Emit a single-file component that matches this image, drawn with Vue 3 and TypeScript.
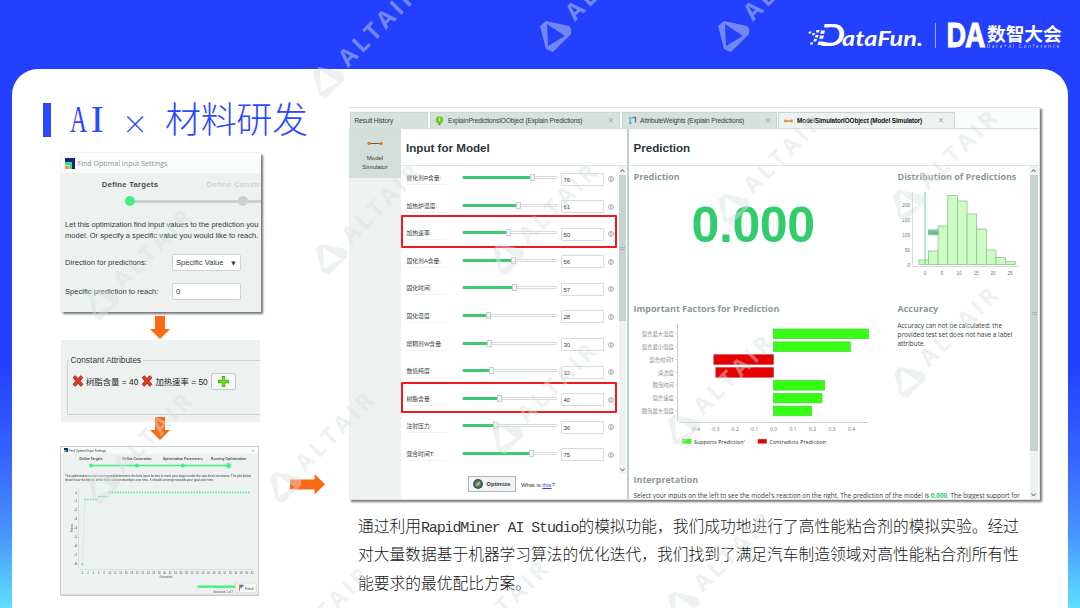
<script setup lang="ts">
interface Parameter {
  label: string;
  value: number;
}

interface Factor {
  label: string;
  from: number;
  to: number;
}

const parameters: Parameter[] = [
  { label: '催化剂R含量:', value: 76 },
  { label: '加热炉温度:', value: 61 },
  { label: '加热速率:', value: 50 },
  { label: '固化剂A含量:', value: 56 },
  { label: '固化时间:', value: 57 },
  { label: '固化温度:', value: 28 },
  { label: '增稠剂W含量:', value: 30 },
  { label: '数值纯度:', value: 32 },
  { label: '树脂含量:', value: 40 },
  { label: '注射压力:', value: 36 },
  { label: '混合时间T:', value: 75 },
];

// x extents in the factor chart's own units
const factors: Factor[] = [
  { label: '混合最大温度', from: 139.5, to: 234.5 },
  { label: '混合最小温度', from: 139.5, to: 216.3 },
  { label: '混合时间T', from: 79.8, to: 139.5 },
  { label: '清洁度', from: 81.8, to: 139.5 },
  { label: '脱泡时间', from: 139.5, to: 190.7 },
  { label: '混合速度', from: 139.5, to: 188 },
  { label: '脱泡最大温度', from: 139.5, to: 177.7 },
];
const factorTicks = ['-0.4', '-0.3', '-0.2', '-0.1', '0.0', '0.1', '0.2', '0.3', '0.4'];

const histogram = [4.5, 13.5, 38.5, 69, 63.5, 50.5, 35.5, 14.5, 7, 2.7];

const steps = [
  { x: 31, label: 'Define Targets', w: 23 },
  { x: 77, label: 'Define Constraints', w: 29 },
  { x: 122.7, label: 'Optimization Parameters', w: 40 },
  { x: 168.5, label: 'Running Optimization', w: 35 },
];

// fitness per generation: one bad start, two plateaus, then converged
const fitness = Array.from({ length: 62 }, (_, i) => {
  let y = 46.4;
  if (i === 0) y = 118.4;
  else if (i < 6) y = 53.5;
  else if (i < 10) y = 50.5;
  return { x: 22.4 + i * 2.73, y };
});

const watermarks = [
  [328, 82], [555, 36], [733, 36],
  [103, 304], [331, 259], [508, 259], [733, 209], [908, 205],
  [103, 488], [285, 487], [507, 438], [683, 430], [909, 382],
  [280, 662], [459, 656], [683, 607],
];
</script>

<template>
  <div class="slide">
    <header class="brand">
      <svg class="datafun" width="118" height="28" viewBox="0 0 118 28">
        <text x="13" y="24.500" class="datafun-d" textLength="25" lengthAdjust="spacingAndGlyphs">D</text>
        <path d="M12 6.500h13L21.500 21H8z" fill="#2440ff" />
        <path fill="#fff" d="M2 10.500h2.500l-.5 2H1.500zM5.500 12h2.500l-.6 2.300H5zM9.500 9h3l-.7 2.600H9zM14 9.500h4l-.9 3.200h-4zM8.500 14h3l-.7 2.600H8zM13 14.500h4l-.9 3.200h-4zM7 18h3l-.6 2.400H6.500zM3.500 21.500h2.800l-.5 2H3zM11.500 20.500h4.800l-.9 3.600h-4.800z" />
        <text x="35" y="24.500" class="datafun-t" textLength="81" lengthAdjust="spacingAndGlyphs">ataFun.</text>
      </svg>
      <span class="brand-rule"></span>
      <svg class="da" width="37" height="28" viewBox="0 0 37 28">
        <text x="-1.500" y="26" textLength="39" lengthAdjust="spacingAndGlyphs">DA</text>
      </svg>
      <div class="summit">
        <strong>数智大会</strong>
        <small>Data+AI Conference</small>
      </div>
    </header>

    <main class="card">
      <section class="flow">
        <h1 class="title">
          <span class="title-bar"></span>
          <svg width="250" height="44" viewBox="0 0 250 44">
            <text x="0" y="34" class="latin" textLength="17" lengthAdjust="spacingAndGlyphs">A</text>
            <text x="20.500" y="34" class="latin" textLength="13.500" lengthAdjust="spacingAndGlyphs">I</text>
            <text x="65" y="36" class="times">×</text>
            <text x="95" y="35" class="han" textLength="143">材料研发</text>
          </svg>
        </h1>

        <div class="dialog">
          <div class="dialog-bar">
            <svg width="10" height="11" viewBox="0 0 10 11">
              <path d="M0 0h10v11H7V4H0z" fill="#14286e" />
              <path d="M0 4h7v7H4.500V7H0z" fill="#2fe0a0" />
              <path d="M0 7.500h4V11H0z" fill="#ff9a2e" />
            </svg>
            <span>Find Optimal Input Settings</span>
          </div>
          <div class="wizard">
            <div class="wizard-step on"><b>Define Targets</b><i></i></div>
            <div class="wizard-step"><b>Define Constraints</b><i></i></div>
          </div>
          <p class="dialog-text">Let this optimization find input values to the prediction you<br />model. Or specify a specific value you would like to reach.</p>
          <div class="field">
            <label>Direction for predictions:</label>
            <span class="box">Specific Value<em>▼</em></span>
          </div>
          <div class="field">
            <label>Specific prediction to reach:</label>
            <span class="box">0</span>
          </div>
        </div>

        <svg class="down" width="20" height="23" viewBox="0 0 20 23">
          <path d="M5 0h10v13h5L10 23 0 13h5z" fill="#fa6a14" />
        </svg>

        <div class="constants">
          <div class="group">
            <span class="legend">Constant Attributes</span>
            <template v-for="item in ['树脂含量 = 40', '加热速率 = 50']" :key="item">
              <svg width="12" height="12" viewBox="0 0 12 12">
                <path d="M2 1.500l8 9M10 1.500l-8 9" stroke="#a82010" stroke-width="3.600" />
                <path d="M2 1.500l8 9M10 1.500l-8 9" stroke="#df4027" stroke-width="2.200" />
              </svg>
              <span class="attr">{{ item }}</span>
            </template>
            <span class="plus">
              <svg width="11" height="11" viewBox="0 0 11 11">
                <path d="M5.500 0v11M0 5.500h11" stroke="#4aa81a" stroke-width="3.400" />
                <path d="M5.500 .7v9.600M.7 5.500h9.600" stroke="#6cd82a" stroke-width="2.200" />
              </svg>
            </span>
          </div>
        </div>

        <svg class="down second" width="20" height="23" viewBox="0 0 20 23">
          <path d="M5 0h10v13h5L10 23 0 13h5z" fill="#fa6a14" />
        </svg>

        <div class="run">
          <svg class="run-window" width="200" height="150" viewBox="0 0 200 150">
            <rect x=".5" y=".5" width="198" height="148.500" fill="#edf2f1" stroke="#c4cfcc" />
            <rect x="1" y="1" width="197" height="6.500" fill="#fafbfb" />
            <path d="M4 2h4v4H4z" fill="#14286e" /><path d="M4 4h2.500v2H4z" fill="#2fe0a0" />
            <text x="9" y="5.800" class="t3" textLength="37">Find Optimal Input Settings</text>
            <text x="192" y="6" class="t3">×</text>
            <path d="M31 19.500h137.500" stroke="#43ef85" stroke-width="1.300" />
            <circle v-for="s in steps" :key="s.x" :cx="s.x" cy="19.500" r="2.100" fill="#43ef85" />
            <circle cx="168.500" cy="19.500" r="3" fill="#43ef85" opacity=".5" />
            <text v-for="s in steps" :key="s.label" :x="s.x - s.w / 2" y="14" class="t3 bold" :textLength="s.w">{{ s.label }}</text>
            <text x="5" y="30.800" class="t3" textLength="186">The optimization is now running and determines the best input factors to meet your target under the specified constraints. The plot below</text>
            <text x="5" y="35.300" class="t3" textLength="149">shows how the fitness of the best solution develops over time. It should converge towards your goal over time.</text>
            <path d="M18.500 43v79M20 123.500h173" stroke="#ccd3d2" stroke-width=".6" fill="none" />
            <text v-for="n in 9" :key="n" x="17" :y="47.500 + (n - 1) * 8.900" class="t3 end">{{ n === 1 ? 0 : 1 - n }}</text>
            <text v-for="n in 32" :key="'x' + n" :x="22.400 + (n - 1) * 5.480" y="127.600" class="t2">{{ (n - 1) * 2 }}</text>
            <text x="106" y="131.800" class="t2">Generation</text>
            <text x="0" y="0" class="t2" transform="translate(13 82) rotate(-90)">Fitness</text>
            <path d="M22.400 118.400L25 53.500" stroke="#cfe0d8" stroke-width=".6" />
            <circle v-for="p in fitness" :key="p.x" :cx="p.x" :cy="p.y" r=".85" fill="#43ef85" />
            <rect x="137.500" y="139.500" width="38" height="2.300" fill="#43ef85" />
            <text x="163" y="146.500" class="t2">Generation 1 of 2</text>
            <rect x="175.500" y="137" width="21" height="9.500" fill="#f7f9f9" stroke="#c4cfcc" stroke-width=".5" />
            <path d="M179.500 138.500v6.500" stroke="#e08030" stroke-width="1" />
            <path d="M180 138.800h4l-3.500 4z" fill="#4a6a90" />
            <text x="185" y="143.500" class="t3">Finish</text>
          </svg>
          <svg class="right-arrow" width="35" height="21" viewBox="0 0 35 21">
            <path d="M0 5.500h24.500V0L35 10.300 24.500 20.600v-5.200H0z" fill="#fa6a14" />
          </svg>
        </div>
      </section>

      <section class="studio-side">
        <div class="studio">
          <nav class="tabs">
            <span class="tab history">Result History</span>
            <span class="tab explain">
              <svg width="9" height="9" viewBox="0 0 9 9"><circle cx="4.500" cy="4" r="3.800" fill="#6ad01c" /><path d="M3.500 7.500h2V9h-2z" fill="#667" /><path d="M4.500 2v3" stroke="#fff" /></svg>
              <span>ExplainPredictionsIOObject (Explain Predictions)</span><i>✕</i>
            </span>
            <span class="tab weights">
              <svg width="9" height="9" viewBox="0 0 9 9"><path d="M2.200 1v7M.8 1.800h3M.8 7h3" stroke="#3cc0e8" stroke-width="1.300" /><path d="M4.500 1.500H7.500v5" stroke="#6b8088" stroke-width="1.400" fill="none" /></svg>
              <span>AttributeWeights (Explain Predictions)</span><i>✕</i>
            </span>
            <span class="tab active">
              <svg width="9" height="4" viewBox="0 0 9 4"><path d="M1 2h7" stroke="#667" /><circle cx="1.500" cy="2" r="1.400" fill="#f80" /><circle cx="7.500" cy="2" r="1.400" fill="#f80" /></svg>
              <span>ModelSimulatorIOObject (Model Simulator)</span><i>✕</i>
            </span>
          </nav>

          <div class="workspace">
            <aside class="rail">
              <div class="rail-item">
                <svg width="16" height="5" viewBox="0 0 16 5"><path d="M2 2.500h12" stroke="#47606a" /><circle cx="2" cy="2.500" r="1.700" fill="#f97a14" /><circle cx="14" cy="2.500" r="1.700" fill="#f97a14" /></svg>
                <span>Model</span>
                <span>Simulator</span>
              </div>
            </aside>

            <div class="inputs">
              <h2>Input for Model</h2>
              <div class="inputs-body">
                <div class="rows">
                  <div v-for="p in parameters" :key="p.label" class="row">
                    <span class="row-label">{{ p.label }}</span>
                    <div class="slider">
                      <div class="slider-fill" :style="{ width: p.value * 0.98 + '%' }"></div>
                      <div class="slider-thumb"></div>
                    </div>
                    <span class="row-value">{{ p.value }}</span>
                    <svg class="info" width="6" height="6" viewBox="0 0 6 6"><circle cx="3" cy="3" r="2.500" fill="none" stroke="#8a9291" stroke-width=".7" /><path d="M3 1.300v3.400" stroke="#6f7877" stroke-width=".8" /></svg>
                  </div>
                  <div class="mark rate"></div>
                  <div class="mark resin"></div>
                </div>
                <div class="scroll">
                  <svg width="7" height="9" viewBox="0 0 7 9"><path d="M1.500 6l2-2.500 2 2.500" class="chev" /></svg>
                  <div class="thumb"><i></i></div>
                  <svg class="bottom" width="7" height="9" viewBox="0 0 7 9"><path d="M1.500 3.500l2 2.500 2-2.500" class="chev" /></svg>
                </div>
              </div>
              <div class="actions">
                <span class="optimize">
                  <svg width="10" height="10" viewBox="0 0 10 10"><circle cx="5" cy="5" r="4.900" fill="#33515c" /><circle cx="5" cy="5" r="3.400" fill="#4d7884" /><path d="M3 7l1-2.500L7.500 2 6 6z" fill="#f2c21c" /></svg>
                  Optimize
                </span>
                <span class="what">What is <u>this</u>?</span>
              </div>
            </div>

            <div class="splitter"></div>

            <div class="result">
              <h2>Prediction</h2>
              <div class="result-body">
                <div class="result-grid">
                  <div class="cell">
                    <h3>Prediction</h3>
                    <div class="score">0.000</div>
                  </div>
                  <div class="cell">
                    <h3>Distribution of Predictions</h3>
                    <svg class="hist" width="128" height="90" viewBox="0 0 128 90">
                      <path d="M14.500 4v73M14 78.500h107" stroke="#d4dad9" fill="none" />
                      <text v-for="n in 5" :key="n" x="12" :y="79 - (n - 1) * 15.100" class="axis end">{{ (n - 1) * 50 }}</text>
                      <text v-for="n in 6" :key="'b' + n" :x="27 + (n - 1) * 17" y="86.500" class="axis mid">{{ (n - 1) * 5 }}</text>
                      <rect v-for="(h, i) in histogram" :key="'h' + i" :x="20.800 + i * 9.650" :y="76.500 - h" width="9.650" :height="h" fill="#ccfcc3" stroke="#98bd97" stroke-width=".8" />
                      <path d="M27 4v72.500" stroke="#58dc96" />
                      <rect x="30" y="41.300" width="10.500" height="6" fill="#8fc8b0" />
                      <text x="30.500" y="46.300" class="axis tag">0.000</text>
                    </svg>
                  </div>
                  <div class="cell">
                    <h3>Important Factors for Prediction</h3>
                    <svg class="factors" width="250" height="132" viewBox="0 0 250 132">
                      <path d="M43.500 5v97M45 103.500h189" stroke="#c9cfce" fill="none" />
                      <g v-for="(f, i) in factors" :key="f.label">
                        <path :d="`M41 ${14.8 + i * 12.85}h3`" stroke="#c9cfce" stroke-width=".7" />
                        <text x="40" :y="17 + i * 12.850" class="factor-label">{{ f.label }}</text>
                        <rect :x="f.from" :y="10 + i * 12.850" :width="f.to - f.from" height="9.700" :fill="f.from < 139 ? '#e60000' : '#35ff12'" :stroke="f.from < 139 ? '#c33' : '#48c838'" stroke-width=".6" />
                      </g>
                      <text v-for="(t, i) in factorTicks" :key="t" :x="61.500 + i * 19.500" y="111.500" class="tick">{{ t }}</text>
                      <rect x="48.500" y="120.200" width="8.500" height="4" fill="#35ff12" stroke="#48c838" stroke-width=".6" />
                      <text x="60" y="124.500" class="key" textLength="51">Supports Prediction'</text>
                      <rect x="124" y="120.200" width="8.500" height="4" fill="#e60000" stroke="#b33" stroke-width=".6" />
                      <text x="135.500" y="124.500" class="key" textLength="56.500">Contradicts Prediction</text>
                    </svg>
                  </div>
                  <div class="cell">
                    <h3>Accuracy</h3>
                    <p class="accuracy">Accuracy can not be calculated: the<br />provided test set does not have a label<br />attribute.</p>
                  </div>
                  <div class="cell wide">
                    <h3>Interpretation</h3>
                    <p class="interp">Select your inputs on the left to see the model's reaction on the right. The prediction of the model is <b>0.000</b>. The biggest support for</p>
                  </div>
                </div>
                <div class="scroll wide-scroll">
                  <svg width="7" height="9" viewBox="0 0 7 9"><path d="M1.500 6l2-2.500 2 2.500" class="chev" /></svg>
                  <div class="thumb"><i></i></div>
                  <svg class="bottom" width="7" height="9" viewBox="0 0 7 9"><path d="M1.500 3.500l2 2.500 2-2.500" class="chev" /></svg>
                </div>
              </div>
            </div>
          </div>
        </div>

        <p class="summary">
          通过利用<span>RapidMiner AI Studio</span>的模拟功能，我们成功地进行了高性能粘合剂的模拟实验。经过<br />
          对大量数据基于机器学习算法的优化迭代，我们找到了满足汽车制造领域对高性能粘合剂所有性<br />
          能要求的最优配比方案。
        </p>
      </section>
    </main>

    <svg class="watermarks" width="1080" height="608" viewBox="0 0 1080 608">
      <g v-for="([x, y], i) in watermarks" :key="i" :transform="`translate(${x} ${y})`">
        <path fill-rule="evenodd" d="M-15-10L-9-15 14-10Q17-8 16-2L-2 16-9 13ZM-8-12L-7 10 10 0Z" />
        <text transform="translate(20 -14) rotate(-45)" x="0" y="0" textLength="100">ALTAIR</text>
      </g>
    </svg>
  </div>
</template>

<style>
body {
  margin: 0;
  overflow: hidden;
}
</style>

<style scoped>
.slide {
  position: relative;
  width: 1080px;
  height: 608px;
  overflow: hidden;
  display: flex;
  flex-direction: column;
  background: linear-gradient(#2440ff 60%, #3563ff 75%, #4796ff 88%, #5ee0ff 100%);
  font-family: "Liberation Sans", "Noto Sans CJK SC", sans-serif;
  color: #333b3c;
}

.slide * {
  box-sizing: border-box;
}

h1,
h2,
h3,
p {
  margin: 0;
}

svg {
  flex: none;
  display: block;
  overflow: visible;
}

/* header */
.brand {
  flex: none;
  height: 69px;
  padding: 21px 18px 0 0;
  display: flex;
  justify-content: flex-end;
  align-items: flex-start;
  color: #fff;
}

.datafun-d,
.datafun-t {
  fill: #fff;
  font-family: Lato, sans-serif;
  font-style: italic;
  font-weight: 700;
}

.datafun-d {
  font-size: 30px;
}

.datafun-t {
  font-size: 21px;
}

.brand-rule {
  width: 1px;
  height: 25px;
  margin: 2px 12px 0 10px;
  background: rgba(255, 255, 255, 0.55);
}

.da text {
  fill: #fff;
  font-family: Inter, sans-serif;
  font-weight: 700;
  font-size: 33px;
  stroke: #fff;
  stroke-width: 0.8px;
}

.summit {
  width: 75px;
  margin-left: 2px;
  display: flex;
  flex-direction: column;
}

.summit strong {
  font: 700 18.7px/23px "Noto Sans CJK SC", sans-serif;
  white-space: nowrap;
}

.summit small {
  font: 4.4px/5px "Open Sans", sans-serif;
  letter-spacing: 1.85px;
  white-space: nowrap;
  opacity: 0.75;
}

/* white card */
.card {
  flex: 1;
  margin: 0 12px;
  border-radius: 26px 26px 0 0;
  background: #fff;
  display: flex;
}

.flow {
  width: 337px;
  padding: 29px 0 0 31px;
  display: flex;
  flex-direction: column;
  align-items: flex-start;
}

.title {
  height: 44px;
  display: flex;
  align-items: flex-start;
  gap: 19px;
}

.title-bar {
  width: 8px;
  height: 34px;
  margin-top: 5px;
  background: #2a48ff;
}

.title text {
  fill: #2a48ff;
}

.latin {
  font: 37px "Liberation Serif", serif;
}

.times {
  font: 300 26px "Noto Sans CJK SC", sans-serif;
  text-anchor: middle;
}

.han {
  font: 300 36px "Noto Sans CJK SC", sans-serif;
}

.dialog {
  width: 200px;
  height: 159px;
  margin: 11px 0 0 17.5px;
  background: #edf2f1;
  box-shadow: 2px 2px 2px #777, 0 0 1px #aaa;
  display: flex;
  flex-direction: column;
}

.dialog-bar {
  height: 20px;
  padding: 0 4px;
  display: flex;
  align-items: center;
  gap: 3px;
  background: #fafbfb;
  font: 7.1px "Open Sans", sans-serif;
  color: #8f9393;
}

.wizard {
  height: 46px;
  padding-top: 7px;
  display: flex;
  overflow: hidden;
}

.wizard-step {
  flex: none;
  position: relative;
  width: 113px;
  margin-left: 13px;
  display: flex;
  flex-direction: column;
  align-items: center;
  gap: 6px;
}

.wizard-step + .wizard-step {
  margin-left: 0;
}

.wizard-step b {
  font: 700 7.7px/10px "Liberation Sans", sans-serif;
  letter-spacing: 0.25px;
  color: #cdd4d3;
  white-space: nowrap;
}

.wizard-step.on b {
  color: #47514f;
}

.wizard-step i {
  position: relative;
  width: 10px;
  height: 10px;
  border-radius: 50%;
  background: #c9d1d0;
}

.wizard-step.on i {
  background: #43ef85;
}

.wizard-step i::after {
  content: "";
  position: absolute;
  left: 10px;
  top: 3.5px;
  width: 104px;
  height: 3px;
  background: #c9d1d0;
}

.dialog-text {
  padding-left: 4.5px;
  font-size: 7.55px;
  line-height: 11px;
  white-space: nowrap;
}

.field {
  height: 29px;
  padding-left: 4.5px;
  display: flex;
  align-items: center;
  font-size: 7.6px;
}

.dialog-text + .field {
  margin-top: 7px;
}

.field label {
  width: 107px;
  white-space: nowrap;
}

.box {
  width: 68.5px;
  height: 17px;
  padding: 0 4px 0 3px;
  display: flex;
  align-items: center;
  justify-content: space-between;
  border: 1px solid #ccd5d3;
  border-radius: 2px;
  background: #fff;
  white-space: nowrap;
}

.box em {
  font: normal 5.5px "DejaVu Sans", sans-serif;
}

.down {
  margin: 4px 0 0 107px;
}

.constants {
  width: 199px;
  height: 82px;
  margin: 1px 0 0 17.5px;
  padding: 20px 0 0 6px;
  background: #edf2f1;
}

.group {
  position: relative;
  height: 55px;
  padding: 0 0 13px 4px;
  display: flex;
  align-items: center;
  gap: 2.5px;
  border: 1px solid #ccd4d2;
  border-right: 0;
}

.legend {
  position: absolute;
  left: 1px;
  top: -6px;
  padding: 0 2px;
  font-size: 8.4px;
  line-height: 11px;
  background: #edf2f1;
}

.attr {
  font-size: 8.4px;
  white-space: nowrap;
  color: #222;
}

.plus {
  width: 25px;
  height: 17px;
  margin-left: 1px;
  display: flex;
  align-items: center;
  justify-content: center;
  border: 1px solid #bfc9c7;
  border-radius: 2px;
  background: #f7f9f9;
}

.down.second {
  position: relative;
  margin-top: -5px;
}

.run {
  margin: 6px 0 0 17px;
  display: flex;
  align-items: flex-start;
}

.run-window {
  filter: drop-shadow(0 0 0.5px #999);
}

.right-arrow {
  margin: 28px 0 0 30px;
}

.t3,
.t2 {
  font: 3.2px "Liberation Sans", sans-serif;
  fill: #3c4444;
}

.t3.bold {
  font-weight: 700;
}

.t2 {
  font-size: 2.6px;
  fill: #555;
  text-anchor: middle;
}

.t3.end {
  text-anchor: end;
}

/* studio window */
.studio-side {
  padding-top: 38px;
}

.studio {
  width: 691px;
  height: 393px;
  border: 1px solid #e0e4e3;
  border-left-width: 0;
  background: #fff;
  box-shadow: 2px 2px 2px #777;
  display: flex;
  flex-direction: column;
}

.tabs {
  flex: none;
  height: 21px;
  padding: 4px 0 0 0.5px;
  display: flex;
  gap: 2px;
  background: #fbfcfc;
  border-bottom: 1px solid #d4dcda;
}

.tab {
  height: 16px;
  padding: 0 5px;
  display: flex;
  align-items: center;
  background: #d8dfdd;
  border: 1px solid #ccd5d3;
  border-bottom: 0;
  font-size: 6.5px;
  letter-spacing: -0.13px;
  white-space: nowrap;
}

.tab i {
  margin-left: auto;
  font: 7.5px "DejaVu Sans", sans-serif;
  color: #a3acaa;
}

.history {
  width: 78.5px;
  padding-left: 4px;
}

.explain {
  width: 190px;
  padding-left: 4px;
  gap: 4px;
}

.weights {
  width: 155px;
  gap: 3px;
}

.tab.active {
  width: 177px;
  margin-left: -1px;
  padding-right: 10px;
  gap: 4px;
  background: #edf1f0;
  font-weight: 700;
  font-size: 6.4px;
  color: #111;
}

.workspace {
  flex: 1;
  min-height: 0;
  display: flex;
}

.rail {
  width: 52px;
  background: #edf2f1;
}

.rail-item {
  height: 49px;
  padding-top: 11px;
  display: flex;
  flex-direction: column;
  align-items: center;
  background: #d3dedb;
  font-size: 6px;
  line-height: 9px;
}

.rail-item svg {
  margin: 1px 0 8px;
}

h2 {
  flex: none;
  height: 37px;
  padding-left: 5px;
  font-size: 11.6px;
  line-height: 38px;
  color: #29353a;
  border-bottom: 1px solid #dfe4e3;
}

.inputs {
  width: 226px;
  display: flex;
  flex-direction: column;
}

.inputs-body {
  flex: none;
  height: 308px;
  display: flex;
}

.rows {
  position: relative;
  width: 218px;
  padding-right: 1px;
}

.row {
  position: relative;
  top: -0.8px;
  height: 27.6px;
  padding-left: 5.5px;
  display: flex;
  align-items: center;
}

.row-label {
  width: 40px;
  margin-right: 15px;
  font: 5.8px/11px "Liberation Sans", "Noto Sans CJK SC", sans-serif;
  border-bottom: 1px solid #f0f2f2;
  white-space: nowrap;
}

.slider {
  width: 95.5px;
  height: 3px;
  margin-top: -3px;
  display: flex;
  align-items: center;
  border: 1px solid #d5dbda;
  border-radius: 1px;
}

.slider-fill {
  height: 3px;
  flex: none;
  background: #3ccb74;
}

.slider-thumb {
  flex: none;
  width: 5px;
  height: 7px;
  margin-left: -2.5px;
  border: 1px solid #c6cfcc;
  background: #f1f4f3;
}

.row-value {
  width: 43.5px;
  height: 13px;
  margin-left: 3.5px;
  padding-left: 2px;
  border: 1px solid #d6dcdb;
  border-radius: 1px;
  background: #fff;
  font-size: 6px;
  line-height: 12px;
}

.info {
  margin-left: 3.5px;
}

.mark {
  position: absolute;
  left: 0;
  width: 216px;
  border: 2px solid #f0191e;
  border-radius: 1px;
}

.rate {
  top: 48.5px;
  height: 33px;
}

.resin {
  top: 216px;
  height: 30.5px;
}

.scroll {
  width: 7px;
  display: flex;
  flex-direction: column;
  background: #edf2f1;
}

.chev {
  fill: none;
  stroke: #5e6766;
  stroke-width: 1;
}

.thumb {
  height: 146px;
  display: flex;
  align-items: center;
  justify-content: center;
  background: #c8d3d0;
}

.thumb i {
  width: 5px;
  height: 3px;
  border: solid #a5b2af;
  border-width: 1px 0;
}

.bottom {
  margin-top: auto;
}

.actions {
  height: 27px;
  padding: 2px 0 0 67px;
  display: flex;
  align-items: flex-start;
  gap: 5px;
}

.optimize {
  width: 48px;
  height: 16px;
  display: flex;
  align-items: center;
  justify-content: center;
  gap: 3px;
  border: 1px solid #aeb9b7;
  background: #f1f4f4;
  font-size: 5.7px;
  font-weight: 700;
}

.what {
  font-size: 5.9px;
  line-height: 18px;
}

.what u {
  color: #3939e8;
}

.splitter {
  width: 2px;
  margin-left: -0.5px;
  background: #c2cecb;
}

.result {
  flex: 1;
  min-width: 0;
  display: flex;
  flex-direction: column;
}

.result-body {
  height: 333px;
  display: flex;
  overflow: hidden;
}

.result-grid {
  width: 401.5px;
  padding: 4px 0 0 5px;
  display: grid;
  grid-template-columns: 264px 132px;
  grid-template-rows: 132px 171px 30px;
}

.wide {
  grid-column: span 2;
}

.cell {
  min-width: 0;
}

h3 {
  font: 700 9px/14px "Open Sans", sans-serif;
  color: #8a9a98;
  white-space: nowrap;
}

.score {
  padding-left: 58px;
  margin-top: 12px;
  font-size: 50px;
  font-weight: 700;
  line-height: 58px;
  letter-spacing: -0.4px;
  color: #33cc6c;
}

.hist {
  margin-top: 4px;
}

.axis {
  font: 4.6px "Liberation Sans", sans-serif;
  fill: #6b7574;
}

.end {
  text-anchor: end;
}

.mid {
  text-anchor: middle;
}

.axis.tag {
  font-size: 4px;
  fill: #159a66;
}

.factors {
  margin-top: 3px;
}

.factor-label {
  font: 5.4px "Noto Sans CJK SC", sans-serif;
  fill: #858d8c;
  text-anchor: end;
}

.tick {
  font: 5px "Open Sans", sans-serif;
  fill: #6b7574;
  text-anchor: middle;
}

.key {
  font: 5.2px "Open Sans", sans-serif;
  fill: #222;
}

.accuracy {
  margin-top: 5px;
  font: 6.4px/9px "Open Sans", sans-serif;
  white-space: nowrap;
}

.interp {
  margin-top: 4px;
  font: 6.39px/10px "Open Sans", sans-serif;
  white-space: nowrap;
}

.interp b {
  color: #33cc6c;
}

.wide-scroll {
  width: 8px;
}

.wide-scroll .thumb {
  height: 276px;
}

.summary {
  margin: 11.5px 0 0 9px;
  font: 300 15.74px/28.5px "Noto Sans CJK SC", sans-serif;
  color: #151515;
  white-space: nowrap;
}

.summary span {
  font: 15px "Liberation Mono", monospace;
  letter-spacing: -1.13px;
  color: #3a3a3a;
}

.watermarks {
  position: absolute;
  left: 0;
  top: 0;
  fill: #d6dfdf;
  opacity: 0.45;
  pointer-events: none;
}

.watermarks text {
  font: 700 23.5px "Open Sans", sans-serif;
}
</style>
